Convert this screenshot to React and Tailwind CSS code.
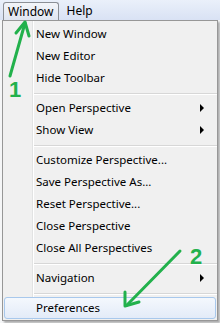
const GROUPS = [
  [{ label: 'New Window' }, { label: 'New Editor' }, { label: 'Hide Toolbar' }],
  [{ label: 'Open Perspective', sub: true }, { label: 'Show View', sub: true }],
  [
    { label: 'Customize Perspective...' },
    { label: 'Save Perspective As...' },
    { label: 'Reset Perspective...' },
    { label: 'Close Perspective' },
    { label: 'Close All Perspectives' },
  ],
  [{ label: 'Navigation', sub: true }],
  [{ label: 'Preferences', active: true }],
]

function MenuItem({ label, sub, active }) {
  return (
    <div
      className={
        'h-[22px] mx-[1px] flex items-center justify-between rounded-[3px] border ' +
        (active
          ? 'border-[#a8c8ec] bg-gradient-to-b from-[#f4f8fd] to-[#e3ebf8]'
          : 'border-transparent')
      }
    >
      <span className="pl-[31px] text-[11.5px] text-black">{label}</span>
      {sub && (
        <span className="mr-[11px] w-0 h-0 border-y-[4px] border-y-transparent border-l-[4px] border-l-black" />
      )}
    </div>
  )
}

function Separator() {
  return (
    <div className="h-[8px] pt-[4px] pl-[31px]">
      <div className="h-[1px] bg-[#d7d7d7]" />
      <div className="h-[1px] bg-white" />
    </div>
  )
}

function Arrows() {
  return (
    <svg className="absolute inset-0 pointer-events-none" width="220" height="323" viewBox="0 0 220 323">
      <g stroke="#22b14c" strokeWidth="3" fill="none" strokeLinecap="round" strokeLinejoin="round">
        <path d="M10 76 L25 23" />
        <path d="M16 33 L25 22 L29 36" />
        <path d="M180 251 L127 305" />
        <path d="M125 292 L125 306 L139 302" />
      </g>
    </svg>
  )
}

export default function App() {
  return (
    <div
      className="relative w-[220px] h-[323px] overflow-hidden bg-[#f5f6f7]"
      style={{ fontFamily: '"Noto Sans", "Segoe UI", sans-serif' }}
    >
      <div className="h-[20px] bg-gradient-to-b from-[#eaf0fa] to-[#d9e2f4] flex items-start pt-[2px] pl-[3px]">
        <div className="h-[18px] px-[4px] rounded-t-[3px] border border-b-0 border-[#8b8f96] bg-gradient-to-b from-[#f3f5f9] to-[#dfe5f1] flex items-center text-[12px] text-black">
          Window
        </div>
        <div className="h-[18px] px-[8px] flex items-center text-[12px] text-black">Help</div>
      </div>
      <div className="ml-[2px] w-[216px] border border-[#979797] shadow-[2px_2px_2px_rgba(0,0,0,0.3)] bg-[linear-gradient(to_right,#f0f0f0_29px,#e2e3e3_29px,#e2e3e3_30px,#ffffff_30px,#ffffff_31px,#f0f0f0_31px)]">
        <div className="pt-[2px] pb-[1px]">
          {GROUPS.map((group, gi) => (
            <div key={gi}>
              {gi > 0 && <Separator />}
              {group.map(item => (
                <MenuItem key={item.label} {...item} />
              ))}
            </div>
          ))}
        </div>
      </div>
      <Arrows />
      <span className="absolute left-[9px] top-[79px] text-[22px] font-bold leading-none text-[#22b14c]" style={{ fontFamily: '"Liberation Sans", Arial, sans-serif' }}>1</span>
      <span className="absolute left-[190px] top-[246px] text-[22px] font-bold leading-none text-[#22b14c]" style={{ fontFamily: '"Liberation Sans", Arial, sans-serif' }}>2</span>
    </div>
  )
}
